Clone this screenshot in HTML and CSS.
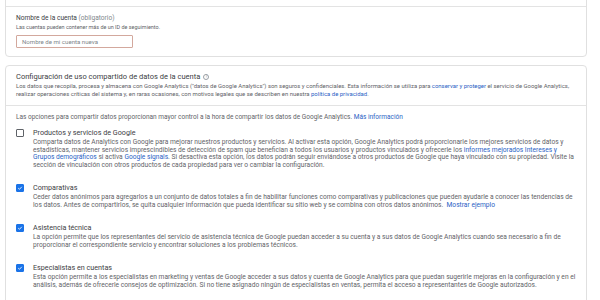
FILE: index.html
```html
<!DOCTYPE html>
<html lang="es">
<head>
<meta charset="utf-8">
<link rel="stylesheet" href="styles.css">
</head>
<body>
<div class="page">
  <section class="card card-top">
    <div class="card-head"></div>
    <div class="card-body">
      <div class="field-label">Nombre de la cuenta <span class="muted">(obligatorio)</span></div>
      <div class="field-hint">Las cuentas pueden contener más de un ID de seguimiento.</div>
      <div class="input">Nombre de mi cuenta nueva</div>
    </div>
  </section>

  <section class="card">
    <div class="card-intro">
      <h2 class="title">Configuración de uso compartido de datos de la cuenta <span class="help">?</span></h2>
      <p class="intro-text">Los datos que recopila, procesa y almacena con Google Analytics ("datos de Google Analytics") son seguros y confidenciales. Esta información se utiliza para <a>conservar y proteger</a> el servicio de Google Analytics, realizar operaciones críticas del sistema y, en raras ocasiones, con motivos legales que se describen en nuestra <a>política de privacidad</a>.</p>
    </div>
    <div class="card-options">
      <p class="options-lead">Las opciones para compartir datos proporcionan mayor control a la hora de compartir los datos de Google Analytics. <a>Más información</a></p>

      <div class="option">
        <span class="cb"></span>
        <div class="opt-body">
          <div class="opt-label">Productos y servicios de Google</div>
          <p class="opt-desc">Comparta datos de Analytics con Google para mejorar nuestros productos y servicios. Al activar esta opción, Google Analytics podrá proporcionarle los mejores servicios de datos y estadísticas, mantener servicios imprescindibles de detección de spam que benefician a todos los usuarios y productos vinculados y ofrecerle los <a>informes mejorados Intereses y <span class="nw">Grupos demográficos</span></a> si activa <a>Google signals</a>. Si desactiva esta opción, los datos podrán seguir enviándose a otros productos de Google que haya vinculado con su propiedad. Visite la sección de vinculación con otros productos de cada propiedad para ver o cambiar la configuración.</p>
        </div>
      </div>

      <div class="option">
        <span class="cb checked"><svg viewBox="0 0 10 10"><path d="M2 5.2 4.1 7.2 8 3" fill="none" stroke="#fff" stroke-width="1.4"/></svg></span>
        <div class="opt-body">
          <div class="opt-label">Comparativas</div>
          <p class="opt-desc">Ceder datos anónimos para agregarlos a un conjunto de datos totales a fin de habilitar funciones como comparativas y publicaciones que pueden ayudarle a conocer las tendencias de los datos. Antes de compartirlos, se quita cualquier información que pueda identificar su sitio web y se combina con otros datos anónimos.&nbsp; <a>Mostrar ejemplo</a></p>
        </div>
      </div>

      <div class="option">
        <span class="cb checked"><svg viewBox="0 0 10 10"><path d="M2 5.2 4.1 7.2 8 3" fill="none" stroke="#fff" stroke-width="1.4"/></svg></span>
        <div class="opt-body">
          <div class="opt-label">Asistencia técnica</div>
          <p class="opt-desc">La opción permite que los representantes del servicio de asistencia técnica de Google puedan acceder a su cuenta y a sus datos de Google Analytics cuando sea necesario a fin de proporcionar el correspondiente servicio y encontrar soluciones a los problemas técnicos.</p>
        </div>
      </div>

      <div class="option">
        <span class="cb checked"><svg viewBox="0 0 10 10"><path d="M2 5.2 4.1 7.2 8 3" fill="none" stroke="#fff" stroke-width="1.4"/></svg></span>
        <div class="opt-body">
          <div class="opt-label">Especialistas en cuentas</div>
          <p class="opt-desc">Esta opción permite a los especialistas en marketing y ventas de Google acceder a sus datos y cuenta de Google Analytics para que puedan sugerirle mejoras en la configuración y en el análisis, además de ofrecerle consejos de optimización. Si no tiene asignado ningún de especialistas en ventas, permita el acceso a representantes de Google autorizados.</p>
        </div>
      </div>
    </div>
  </section>
</div>
</body>
</html>
```

FILE: styles.css
```css
* { box-sizing: border-box; }
html, body { margin: 0; padding: 0; background: #fff; }
body {
  font-family: Roboto, "Noto Sans", Arial, sans-serif;
  color: #5f6368;
  overflow: hidden;
}
p { margin: 0; }
a { color: #2a62c4; text-decoration: none; }
.nw { white-space: nowrap; }

.page {
  width: 582px;
  margin-left: 5px;
  display: flex;
  flex-direction: column;
  gap: 8px;
}

.card {
  border: 1px solid #e0e0e0;
  border-radius: 4px;
  background: #fff;
}
.card-top { margin-top: -12px; }
.card-head {
  height: 18px;
  border-bottom: 1px solid #e3e3e3;
}
.card-body {
  padding: 7px 10px 8px;
}
.field-label {
  font-size: 6.6px;
  line-height: 9px;
  color: #3c4043;
}
.muted { color: #80868b; }
.field-hint {
  font-size: 5.45px;
  line-height: 7px;
  margin-top: 1px;
  color: #5f6368;
}
.input {
  margin-top: 4px;
  width: 117px;
  height: 13px;
  border: 1px solid #d3a89d;
  border-radius: 1px;
  font-size: 6.1px;
  line-height: 11px;
  padding-left: 5px;
  color: #80868b;
}

.card-intro {
  padding: 6px 10px 7px;
  border-bottom: 1px solid #e3e3e3;
}
.title {
  margin: 0;
  font-weight: 400;
  font-size: 7.5px;
  line-height: 10px;
  color: #3c4043;
  display: flex;
  align-items: center;
  gap: 3px;
}
.help {
  display: inline-flex;
  align-items: center;
  justify-content: center;
  width: 6px;
  height: 6px;
  border: 0.8px solid #9aa0a6;
  border-radius: 50%;
  font-size: 4.5px;
  line-height: 1;
  color: #9aa0a6;
}
.intro-text {
  font-size: 5.95px;
  line-height: 8px;
  color: #5f6368;
}

.card-options {
  padding: 7px 10px 12px;
}
.options-lead {
  font-size: 6.5px;
  line-height: 8px;
  margin-bottom: 7px;
}
.option {
  display: flex;
  gap: 9px;
  margin-bottom: 14px;
}
.cb {
  flex: none;
  width: 8px;
  height: 8px;
  margin-top: 0.5px;
  border: 1px solid #5f6368;
  border-radius: 1px;
  display: flex;
}
.cb.checked {
  background: #1a73e8;
  border-color: #1a73e8;
}
.cb svg { width: 100%; height: 100%; }
.opt-body { flex: 1; }
.opt-label {
  font-size: 7.2px;
  line-height: 9px;
  color: #3c4043;
}
.opt-desc {
  margin-top: 2px;
  font-size: 6.65px;
  line-height: 7.5px;
  color: #5f6368;
}
```
